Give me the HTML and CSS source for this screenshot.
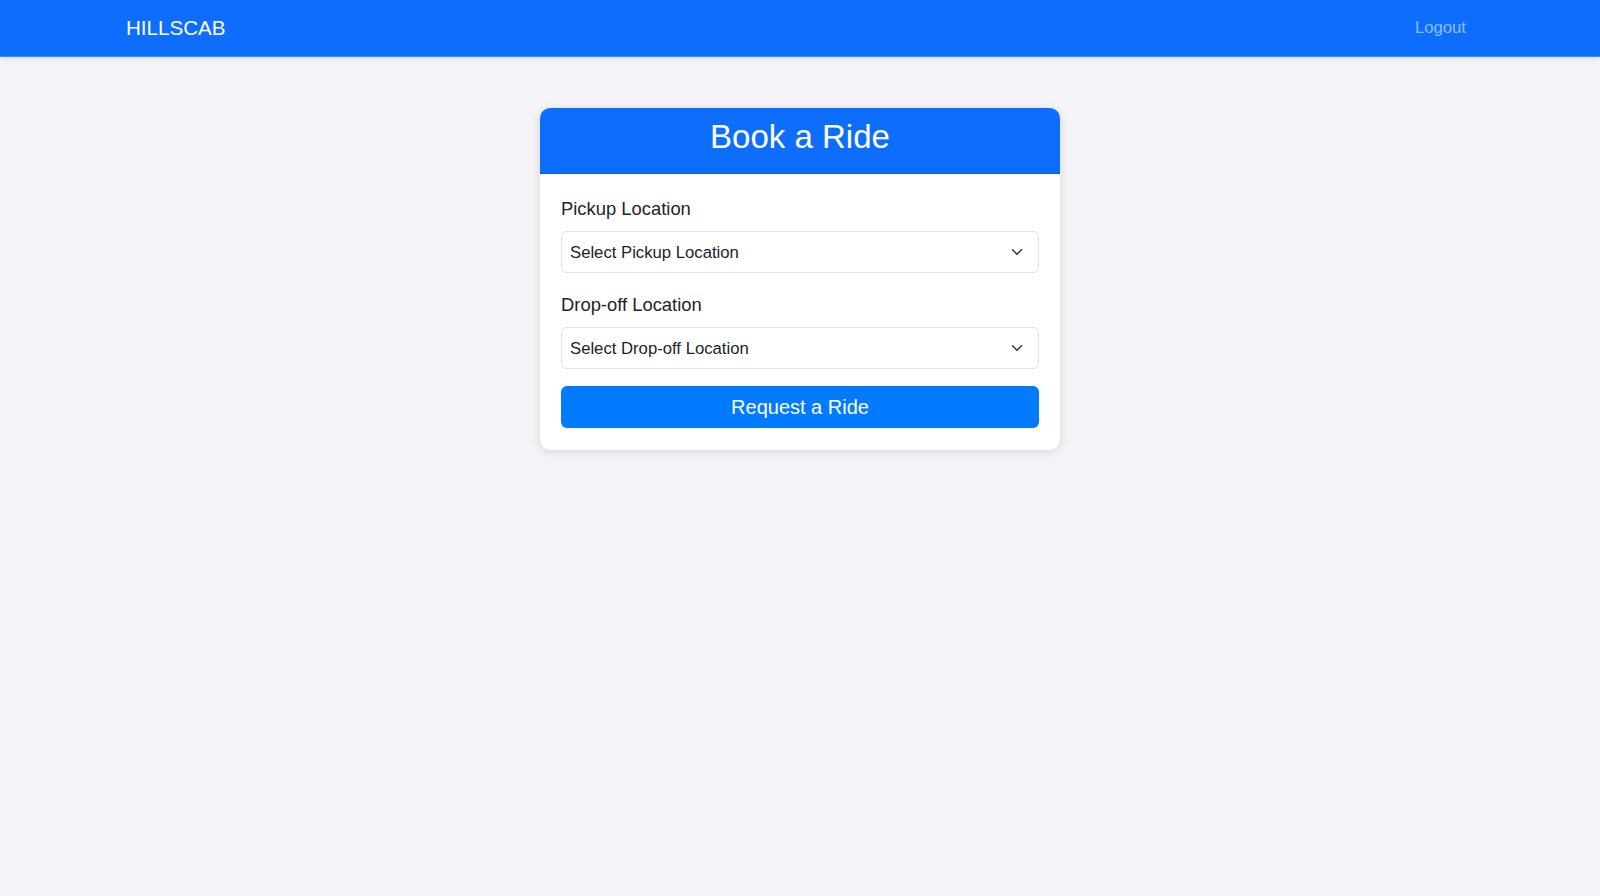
FILE: index.html
```html
<!DOCTYPE html>
<html lang="en">
<head>
<meta charset="utf-8">
<title>HILLSCAB - Book a Ride</title>
<link rel="stylesheet" href="styles.css">
</head>
<body>
<nav class="navbar">
  <a class="brand" href="#">HILLSCAB</a>
  <a class="nav-link" href="#">Logout</a>
</nav>
<main class="page">
  <section class="card">
    <header class="card-header">
      <h2 class="card-title">Book a Ride</h2>
    </header>
    <form class="card-body">
      <div class="form-group">
        <label class="form-label" for="pickup">Pickup Location</label>
        <div class="select-wrap">
          <select class="form-select" id="pickup">
            <option>Select Pickup Location</option>
          </select>
          <svg class="chevron" width="12" height="12" viewBox="0 0 16 16" aria-hidden="true"><path d="M2 5l6 6 6-6" fill="none" stroke="#343a40" stroke-width="2" stroke-linecap="round" stroke-linejoin="round"/></svg>
        </div>
      </div>
      <div class="form-group last">
        <label class="form-label" for="dropoff">Drop-off Location</label>
        <div class="select-wrap">
          <select class="form-select" id="dropoff">
            <option>Select Drop-off Location</option>
          </select>
          <svg class="chevron" width="12" height="12" viewBox="0 0 16 16" aria-hidden="true"><path d="M2 5l6 6 6-6" fill="none" stroke="#343a40" stroke-width="2" stroke-linecap="round" stroke-linejoin="round"/></svg>
        </div>
      </div>
      <button class="btn-primary" type="button">Request a Ride</button>
    </form>
  </section>
</main>
</body>
</html>
```
FILE: styles.css
```css
* { box-sizing: border-box; }

html, body {
  margin: 0;
  padding: 0;
}

body {
  background: #f4f4f8;
  font-family: "Liberation Sans", Arial, sans-serif;
  color: #212529;
  min-height: 896px;
}

.navbar {
  height: 57px;
  background: #0d6efd;
  border-bottom: 1px solid #3d8bfd;
  box-shadow: 0 2px 6px rgba(0, 0, 0, 0.08);
  display: flex;
  align-items: center;
  justify-content: space-between;
  padding: 0 126px;
}

.brand {
  color: #ffffff;
  font-size: 20.6px;
  text-decoration: none;
}

.nav-link {
  color: rgba(255, 255, 255, 0.55);
  font-size: 16.7px;
  text-decoration: none;
  padding: 0 8px;
}

.page {
  display: flex;
  justify-content: center;
  padding-top: 51px;
}

.card {
  width: 520px;
  background: #ffffff;
  border-radius: 10px;
  overflow: hidden;
  box-shadow: 0 2px 10px rgba(0, 0, 0, 0.12);
}

.card-header {
  background: #0d6efd;
  color: #ffffff;
  text-align: center;
  padding: 10px 0 17px;
  border-bottom: 1px solid #0b5ed7;
}

.card-title {
  margin: 0;
  font-size: 33px;
  line-height: 38px;
  font-weight: normal;
}

.card-body {
  padding: 21px 21px 22px;
}

.form-group {
  margin-bottom: 18px;
}

.form-group.last {
  margin-bottom: 17px;
}

.form-label {
  display: block;
  font-size: 18.4px;
  line-height: 27px;
  margin-bottom: 9px;
  color: #212529;
}

.select-wrap {
  position: relative;
}

.form-select {
  display: block;
  width: 100%;
  height: 42px;
  appearance: none;
  -webkit-appearance: none;
  background: #ffffff;
  border: 1px solid #dee2e6;
  border-radius: 6px;
  padding: 0 36px 0 8px;
  font-family: "Liberation Sans", Arial, sans-serif;
  font-size: 16.7px;
  color: #212529;
}

.chevron {
  position: absolute;
  right: 16px;
  top: 15px;
  pointer-events: none;
}

.btn-primary {
  display: block;
  width: 100%;
  height: 42px;
  background: #007bff;
  color: #ffffff;
  border: none;
  border-radius: 6px;
  font-family: "Liberation Sans", Arial, sans-serif;
  font-size: 20px;
  cursor: pointer;
}
```
